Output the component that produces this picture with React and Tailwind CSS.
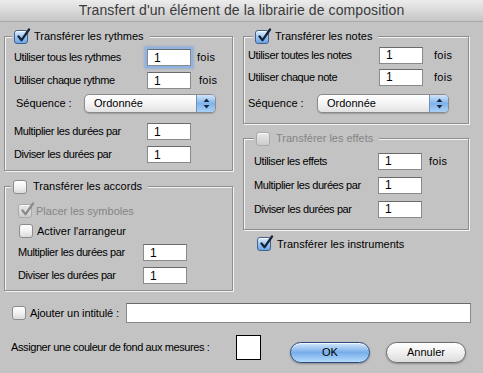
import React from "react";

const Check = ({ checked, disabled }) => {
  const box = checked && !disabled
    ? "border-[#40628f] bg-gradient-to-b from-[#e1eefc] via-[#9cc5f1] to-[#6aa5e6]"
    : disabled
    ? "border-[#a9a9a9] bg-gradient-to-b from-[#e9e9e9] to-[#cdcdcd]"
    : "border-[#8c8c8c] bg-gradient-to-b from-[#ffffff] via-[#f1f1f1] to-[#dcdcdc]";
  return (
    <span className={`relative inline-block w-[14px] h-[14px] shrink-0 rounded-[3px] border ${box} shadow-[inset_0_1px_0_rgba(255,255,255,0.8)]`}>
      {checked && (
        <svg className="absolute left-[1px] top-[-3px]" width="15" height="15" viewBox="0 0 15 15">
          <path
            d="M2.5 8.5 L5.6 12.2 L13 1.5"
            fill="none"
            stroke={disabled ? "#8a8a8a" : "#16243a"}
            strokeWidth="2.3"
            strokeLinecap="round"
            strokeLinejoin="round"
          />
        </svg>
      )}
    </span>
  );
};

const Field = ({ w = "w-[44px]", focused }) => (
  <div
    className={`${w} h-[17px] bg-white border border-[#8a8a8a] border-t-[#6a6a6a] flex items-center pl-[6px] text-[12px] text-black ${
      focused ? "shadow-[0_0_0_2px_#8db3e2,0_0_2px_3px_rgba(120,160,215,0.5)] border-[#5b7fb6]" : ""
    }`}
  >
    1
  </div>
);

const Popup = ({ w }) => (
  <div className={`${w} h-[19px] flex rounded-[5px] border border-[#8b8b8b] bg-gradient-to-b from-[#ffffff] via-[#f4f4f4] to-[#e2e2e2] shadow-[0_1px_1px_rgba(0,0,0,0.2)]`}>
    <span className="flex-1 pl-[9px] text-[11px] leading-[17px] text-black">Ordonnée</span>
    <span className="w-[19px] rounded-r-[4px] border-l border-[#6f8fbc] bg-gradient-to-b from-[#d3e6fa] via-[#80b3ea] to-[#a9d0f7] flex items-center justify-center">
      <svg width="7" height="11" viewBox="0 0 7 11">
        <path d="M3.5 0.5 L6.5 4 L0.5 4 Z" fill="#1b2a40" />
        <path d="M3.5 10.5 L6.5 7 L0.5 7 Z" fill="#1b2a40" />
      </svg>
    </span>
  </div>
);

const Legend = ({ label, checked, disabled, ml }) => (
  <legend className={`${ml} h-[15px] px-[2px] flex items-center gap-[6px] bg-[#c3c3c3]`}>
    <Check checked={checked} disabled={disabled} />
    <span className={`text-[11px] pr-[4px] ${disabled ? "text-[#858585]" : "text-black"}`}>{label}</span>
  </legend>
);

const Row = ({ label, lw, h = "h-[23px]", fois, foisMl = "ml-[6px]", focused, extra = "" }) => (
  <div className={`flex items-center ${h} ${extra}`}>
    <span className={`${lw} text-[11px] tracking-[-0.4px] text-black whitespace-nowrap`}>{label}</span>
    <Field focused={focused} />
    {fois && <span className={`${foisMl} text-[11px] tracking-[0.3px] text-black`}>fois</span>}
  </div>
);

const groupCls =
  "border border-[#8e8e8e] shadow-[1px_1px_0_#f4f4f4,inset_1px_1px_0_#f4f4f4]";

export default function App() {
  return (
    <div className="w-[483px] h-[373px] overflow-hidden bg-[#c3c3c3] font-['Liberation_Sans',Arial,sans-serif] flex flex-col">
      <div className="h-[22px] shrink-0 bg-gradient-to-b from-[#ececec] via-[#dadada] to-[#c6c6c6] border-b border-[#a9a9a9] flex items-center justify-center">
        <span className="text-[14px] text-[#3a3a3a] tracking-[0.1px]">
          Transfert d'un élément de la librairie de composition
        </span>
      </div>

      <div className="flex pl-[4px] mt-[7px]">
        {/* left column */}
        <div className="w-[229px] flex flex-col">
          <fieldset className={`${groupCls} pb-[4px]`}>
            <Legend label="Transférer les rythmes" checked ml="ml-[7px]" />
            <div className="pl-[9px]">
              <Row label="Utiliser tous les rythmes" lw="w-[133px]" fois focused extra="mt-[2px]" />
              <Row label="Utiliser chaque rythme" lw="w-[133px]" fois foisMl="ml-[8px]" />
              <div className="flex items-center h-[23px]">
                <span className="w-[70px] pl-[2px] text-[11px] text-black">Séquence :</span>
                <Popup w="w-[132px]" />
              </div>
              <Row label="Multiplier les durées par" lw="w-[133px]" extra="mt-[5px]" />
              <Row label="Diviser les durées par" lw="w-[133px]" />
            </div>
          </fieldset>

          <fieldset className={`${groupCls} mt-[8px] pb-[3px]`}>
            <Legend label="Transférer les accords" ml="ml-[6px]" />
            <div className="pl-[13px]">
              <div className="flex items-center h-[20px] mt-[7px] gap-[4px]">
                <Check checked disabled />
                <span className="text-[11px] text-[#858585]">Placer les symboles</span>
              </div>
              <div className="flex items-center h-[20px] pl-[1px] gap-[4px]">
                <Check />
                <span className="text-[11px] text-black">Activer l'arrangeur</span>
              </div>
              <Row label="Multiplier les durées par" lw="w-[125px]" />
              <Row label="Diviser les durées par" lw="w-[125px]" />
            </div>
          </fieldset>
        </div>

        {/* right column */}
        <div className="w-[226px] ml-[10px] flex flex-col">
          <fieldset className={`${groupCls} pb-[8px]`}>
            <Legend label="Transférer les notes" checked ml="ml-[9px]" />
            <div className="pl-[4px]">
              <Row label="Utiliser toutes les notes" lw="w-[131px]" h="h-[22px]" fois foisMl="ml-[11px]" />
              <Row label="Utiliser chaque note" lw="w-[131px]" h="h-[22px]" fois foisMl="ml-[11px]" />
              <div className="flex items-center h-[23px] mt-[4px]">
                <span className="w-[69px] text-[11px] text-black">Séquence :</span>
                <Popup w="w-[132px]" />
              </div>
            </div>
          </fieldset>

          <fieldset className={`${groupCls} mt-[7px] pb-[8px]`}>
            <Legend label="Transférer les effets" disabled ml="ml-[10px]" />
            <div className="pl-[10px]">
              <Row label="Utiliser les effets" lw="w-[124px]" h="h-[24px]" fois foisMl="ml-[7px]" extra="mt-[3px]" />
              <Row label="Multiplier les durées par" lw="w-[124px]" h="h-[24px]" />
              <Row label="Diviser les durées par" lw="w-[124px]" h="h-[24px]" />
            </div>
          </fieldset>

          <div className="flex items-center h-[16px] mt-[6px] pl-[14px] gap-[6px]">
            <Check checked />
            <span className="text-[11px] text-black">Transférer les instruments</span>
          </div>
        </div>
      </div>

      <div className="flex items-center h-[20px] mt-[12px] pl-[12px]">
        <Check />
        <span className="ml-[4px] w-[96px] text-[11px] tracking-[-0.1px] text-black whitespace-nowrap">Ajouter un intitulé :</span>
        <div className="w-[345px] h-[20px] bg-white border border-[#8a8a8a] border-t-[#6a6a6a]" />
      </div>

      <div className="flex items-start mt-[12px] pl-[11px]">
        <span className="w-[225px] mt-[4px] text-[11px] tracking-[-0.4px] text-black whitespace-nowrap">
          Assigner une couleur de fond aux mesures :
        </span>
        <div className="w-[25px] h-[25px] bg-white border border-black" />
        <button className="ml-[29px] mt-[7px] w-[80px] h-[21px] rounded-full border border-[#2d4a80] bg-gradient-to-b from-[#d4e7fa] via-[#77aee9] to-[#b4dafc] shadow-[inset_0_1px_0_rgba(255,255,255,0.7),0_1px_2px_rgba(0,0,0,0.3)] text-[11px] text-black">
          OK
        </button>
        <button className="ml-[16px] mt-[7px] w-[80px] h-[21px] rounded-full border border-[#6d6d6d] bg-gradient-to-b from-[#ffffff] via-[#f0f0f0] to-[#dcdcdc] shadow-[0_1px_2px_rgba(0,0,0,0.3)] text-[11px] text-black">
          Annuler
        </button>
      </div>
    </div>
  );
}
